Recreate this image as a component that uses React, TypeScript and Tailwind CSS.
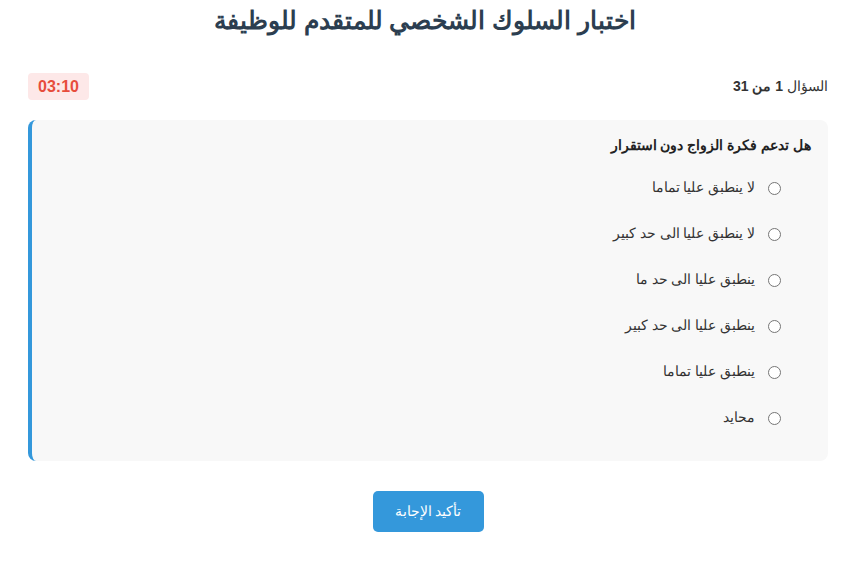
import React, { useState } from "react";

const options = [
  "لا ينطبق عليا تماما",
  "لا ينطبق عليا الى حد كبير",
  "ينطبق عليا الى حد ما",
  "ينطبق عليا الى حد كبير",
  "ينطبق عليا تماما",
  "محايد",
];

export default function App() {
  const [selected, setSelected] = useState<number | null>(null);

  return (
    <div
      className="min-h-[561px] bg-white text-[#333]"
      style={{ fontFamily: '"Liberation Sans", Arial, sans-serif' }}
    >
      <div dir="rtl" className="w-[800px] ml-[28px]">
        <h1 className="text-center text-[25px] leading-[40px] font-bold text-[#2c3e50] pr-[6px]">
          اختبار السلوك الشخصي للمتقدم للوظيفة
        </h1>

        {/* progress + timer */}
        <div className="flex items-center justify-between mt-[33px] h-[27px]">
          <div className="text-[14px] text-[#333]">
            السؤال <b>1 من 31</b>
          </div>
          <div className="bg-[#fde8e8] text-[#e74c3c] font-bold text-[16px] leading-[27px] px-[10px] rounded-[4px]">
            03:10
          </div>
        </div>

        {/* question card */}
        <div className="mt-[20px] bg-[#f8f8f8] border-l-4 border-[#3498db] rounded-[8px] pt-[15px] pb-[20px] pr-[17px] pl-5">
          <h3 className="text-[14px] leading-[20px] font-bold text-[#222] mb-[10px]">
            هل تدعم فكرة الزواج دون استقرار
          </h3>
          <div className="flex flex-col">
            {options.map((opt, i) => (
              <label
                key={i}
                className="flex items-center h-[46px] pr-[30px] gap-[13px] cursor-pointer"
              >
                <span className="w-[13px] h-[13px] rounded-full border border-[#767676] bg-white flex items-center justify-center">
                  {selected === i && (
                    <span className="w-[7px] h-[7px] rounded-full bg-[#3498db]" />
                  )}
                </span>
                <input
                  type="radio"
                  name="q"
                  className="hidden"
                  checked={selected === i}
                  onChange={() => setSelected(i)}
                />
                <span className="text-[13.5px] text-[#333]">{opt}</span>
              </label>
            ))}
          </div>
        </div>

        <div className="flex justify-center mt-[30px]">
          <button className="w-[111px] h-[41px] bg-[#3498db] text-white text-[14px] rounded-[5px]">
            تأكيد الإجابة
          </button>
        </div>
      </div>
    </div>
  );
}
